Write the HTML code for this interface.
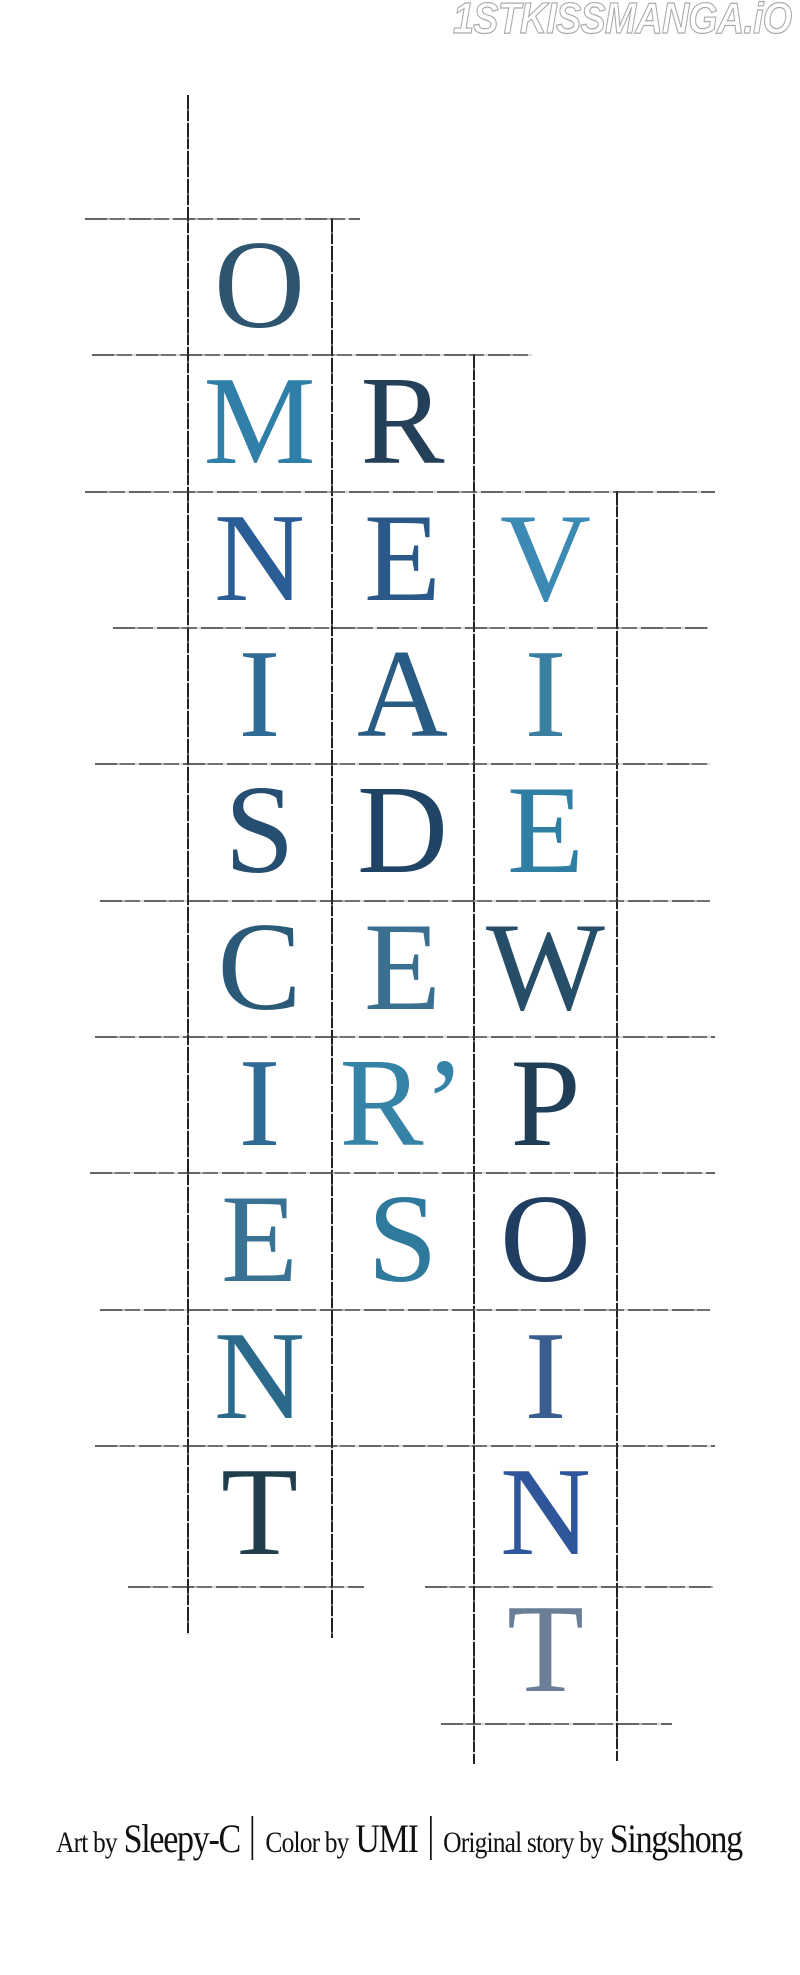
<!DOCTYPE html>
<html><head><meta charset="utf-8"><style>
html,body{margin:0;padding:0;background:#fff;}
body{width:800px;height:1975px;position:relative;overflow:hidden;font-family:"Liberation Serif",serif;}
.wm{position:absolute;left:453px;top:-6px;font-family:"Liberation Sans",sans-serif;font-weight:bold;font-style:italic;font-size:44px;color:#fff;-webkit-text-stroke:1.2px #aaa;transform:scaleX(0.86);transform-origin:left top;white-space:nowrap;letter-spacing:-1px;}
.v{position:absolute;width:2px;background:repeating-linear-gradient(180deg,#222 0 14px,#666 14px 16px,#222 16px 26px,rgba(0,0,0,0.15) 26px 28px);}
.h{position:absolute;height:2px;background:repeating-linear-gradient(90deg,#333 0 22px,#999 22px 25px,#444 25px 40px,rgba(0,0,0,0.2) 40px 44px);opacity:.75}
.L{position:absolute;width:143px;text-align:center;font-size:126px;line-height:130px;}
.cr{position:absolute;left:56px;top:1815px;white-space:nowrap;color:#111;transform:scaleX(0.85);transform-origin:left top;}
.cr .s{font-size:30px;letter-spacing:-1px}
.cr .b{font-size:40px;letter-spacing:-1.5px;margin-left:8px}
.cr .bar{display:inline-block;width:2px;height:44px;background:#111;vertical-align:-8px;margin:0 14px}
</style></head><body>
<div class="wm">1STKISSMANGA.iO</div>

<div class="v" style="left:187px;top:95px;height:1540px"></div>
<div class="v" style="left:331px;top:218px;height:1420px"></div>
<div class="v" style="left:473px;top:354px;height:1410px"></div>
<div class="v" style="left:616px;top:491px;height:1270px"></div>

<div class="h" style="left:85px;top:218px;width:275px"></div>
<div class="h" style="left:92px;top:354px;width:440px"></div>
<div class="h" style="left:85px;top:491px;width:630px"></div>
<div class="h" style="left:113px;top:627px;width:595px"></div>
<div class="h" style="left:95px;top:763px;width:615px"></div>
<div class="h" style="left:100px;top:900px;width:610px"></div>
<div class="h" style="left:95px;top:1036px;width:620px"></div>
<div class="h" style="left:90px;top:1172px;width:625px"></div>
<div class="h" style="left:100px;top:1309px;width:610px"></div>
<div class="h" style="left:95px;top:1445px;width:620px"></div>
<div class="h" style="left:128px;top:1586px;width:236px"></div>
<div class="h" style="left:425px;top:1586px;width:288px"></div>
<div class="h" style="left:441px;top:1723px;width:231px"></div>

<div class="L" style="left:188px;top:221px;color:#2d5570">O</div>
<div class="L" style="left:188px;top:357px;color:#2f7fa8">M</div>
<div class="L" style="left:188px;top:494px;color:#2a5d96">N</div>
<div class="L" style="left:188px;top:630px;color:#2f6b94">I</div>
<div class="L" style="left:188px;top:766px;color:#254e70">S</div>
<div class="L" style="left:188px;top:903px;color:#2b5a78">C</div>
<div class="L" style="left:188px;top:1039px;color:#2f6b96">I</div>
<div class="L" style="left:188px;top:1175px;color:#3a7294">E</div>
<div class="L" style="left:188px;top:1312px;color:#2c6a8c">N</div>
<div class="L" style="left:188px;top:1448px;color:#1f3f4c">T</div>

<div class="L" style="left:331px;top:357px;color:#243f58">R</div>
<div class="L" style="left:331px;top:494px;color:#2a5888">E</div>
<div class="L" style="left:331px;top:630px;color:#285c84">A</div>
<div class="L" style="left:331px;top:766px;color:#1f4466">D</div>
<div class="L" style="left:331px;top:903px;color:#3b6f90">E</div>
<div class="L" style="left:331px;top:1039px;color:#3683a8">R’</div>
<div class="L" style="left:331px;top:1175px;color:#2f7a9c">S</div>

<div class="L" style="left:474px;top:494px;color:#3a8ab4">V</div>
<div class="L" style="left:474px;top:630px;color:#3a7ea0">I</div>
<div class="L" style="left:474px;top:766px;color:#2f7ea4">E</div>
<div class="L" style="left:474px;top:903px;color:#264e68">W</div>
<div class="L" style="left:474px;top:1039px;color:#1f3f58">P</div>
<div class="L" style="left:474px;top:1175px;color:#1f3e62">O</div>
<div class="L" style="left:474px;top:1312px;color:#3a5e90">I</div>
<div class="L" style="left:474px;top:1448px;color:#2f569a">N</div>
<div class="L" style="left:474px;top:1585px;color:#6a7e98">T</div>

<div class="cr"><span class="s">Art by</span><span class="b">Sleepy-C</span><span class="bar"></span><span class="s">Color by</span><span class="b">UMI</span><span class="bar"></span><span class="s">Original story by</span><span class="b">Singshong</span></div>
</body></html>
